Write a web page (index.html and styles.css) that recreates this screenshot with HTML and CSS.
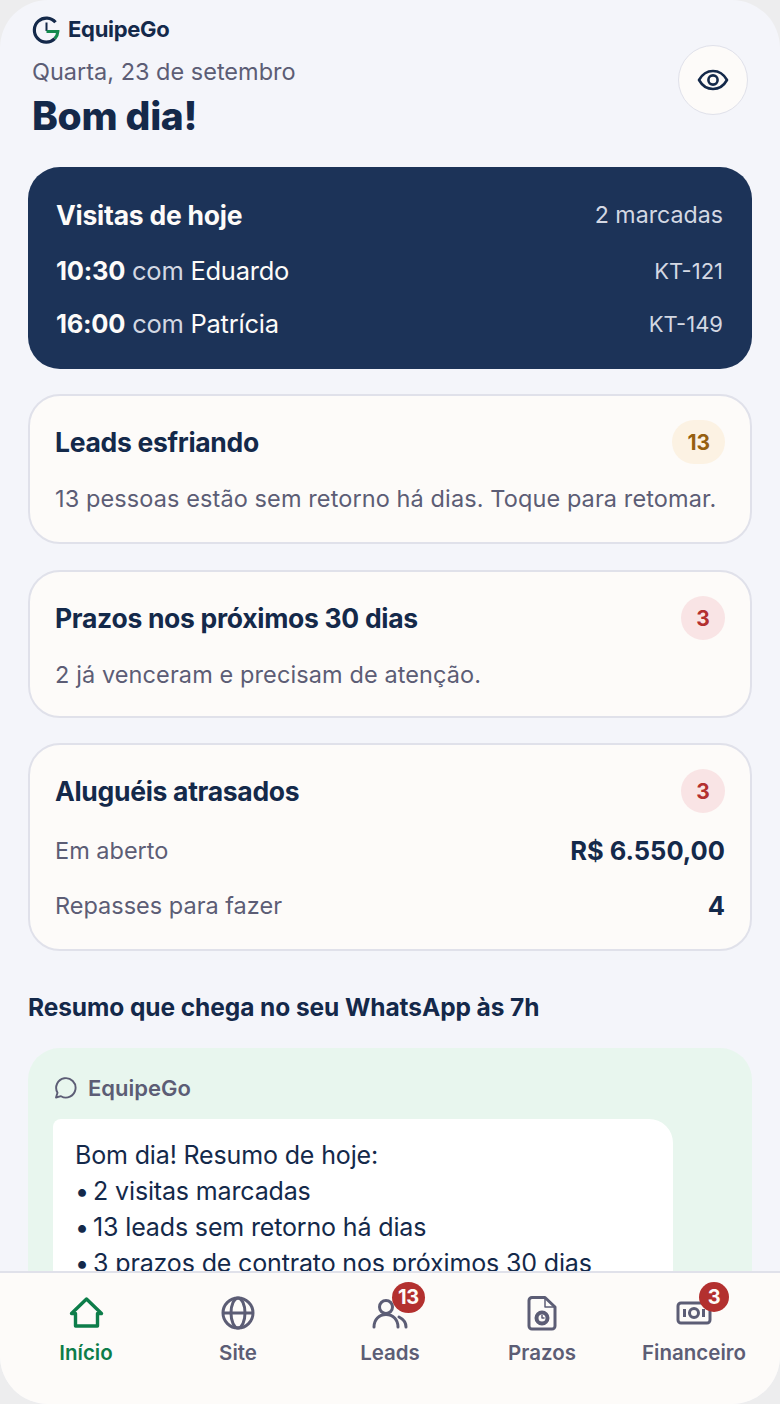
FILE: index.html
```html
<!DOCTYPE html>
<html lang="pt-BR">
<head>
    <meta charset="UTF-8">
    <meta name="viewport" content="width=device-width, initial-scale=1.0">
    <title>EquipeGo</title>
    <link rel="stylesheet" href="styles.css">
</head>
<body>
    <div class="phone">
        <main class="content">
            <!-- Header -->
            <header class="top">
                <div class="top-left">
                    <div class="brand">
                        <svg class="brand-logo" viewBox="0 0 28 28" fill="none" stroke-width="3.200">
                            <path d="M23.500 6.300A12 12 0 1 0 22.800 22.600" stroke="#14294a"/>
                            <path d="M14.500 6.500V15" stroke="#14294a" stroke-width="2"/>
                            <path d="M14.500 15.500H25.800C25.700 18.200 24.600 20.700 22.800 22.600" stroke="#14894e"/>
                        </svg>
                        <span>EquipeGo</span>
                    </div>
                    <p class="date">Quarta, 23 de setembro</p>
                    <h1>Bom dia!</h1>
                </div>
                <button class="eye-button">
                    <svg viewBox="0 0 32 32" fill="none" stroke="#14294a" stroke-width="2.600">
                        <path d="M2 16C5.500 9.800 10.200 7 16 7s10.500 2.800 14 9c-3.500 6.200-8.200 9-14 9S5.500 22.200 2 16Z" stroke-linejoin="round"/>
                        <circle cx="16" cy="16" r="4.600"/>
                    </svg>
                </button>
            </header>

            <!-- Visits -->
            <section class="visits">
                <div class="visit-row visit-head">
                    <strong>Visitas de hoje</strong>
                    <span class="visit-count">2 marcadas</span>
                </div>
                <div class="visit-row">
                    <span class="visit-who"><b>10:30</b> <i>com</i> Eduardo</span>
                    <span class="visit-code">KT-121</span>
                </div>
                <div class="visit-row">
                    <span class="visit-who"><b>16:00</b> <i>com</i> Patrícia</span>
                    <span class="visit-code">KT-149</span>
                </div>
            </section>

            <!-- Cards -->
            <section class="card">
                <div class="card-head">
                    <h2>Leads esfriando</h2>
                    <span class="pill pill-amber">13</span>
                </div>
                <p class="card-text">13 pessoas estão sem retorno há dias. Toque para retomar.</p>
            </section>

            <section class="card card-short">
                <div class="card-head">
                    <h2>Prazos nos próximos 30 dias</h2>
                    <span class="pill pill-red">3</span>
                </div>
                <p class="card-text">2 já venceram e precisam de atenção.</p>
            </section>

            <section class="card card-rent">
                <div class="card-head">
                    <h2>Aluguéis atrasados</h2>
                    <span class="pill pill-red">3</span>
                </div>
                <div class="money-row">
                    <span>Em aberto</span>
                    <strong>R$ 6.550,00</strong>
                </div>
                <div class="money-row">
                    <span>Repasses para fazer</span>
                    <strong>4</strong>
                </div>
            </section>

            <h3 class="section-title">Resumo que chega no seu WhatsApp às 7h</h3>

            <section class="whats">
                <div class="whats-head">
                    <svg viewBox="0 0 24 24" fill="none" stroke="#5c5d75" stroke-width="1.900" stroke-linejoin="round">
                        <path d="M3 21.500l1.500-4.800A9.700 9.700 0 1 1 8 20.200Z"/>
                    </svg>
                    <span>EquipeGo</span>
                </div>
                <div class="bubble">
                    Bom dia! Resumo de hoje:<br>
                    <span class="dot">• </span>2 visitas marcadas<br>
                    <span class="dot">• </span>13 leads sem retorno há dias<br>
                    <span class="dot">• </span>3 prazos de contrato nos próximos 30 dias<br>
                    <span class="dot">• </span>3 aluguéis atrasados
                </div>
            </section>
        </main>

        <!-- Bottom nav -->
        <nav class="tabs">
            <a class="tab tab-active">
                <span class="tab-icon">
                    <svg viewBox="0 0 36 36" fill="none" stroke="#0d7d4a" stroke-width="3.400" stroke-linejoin="round" stroke-linecap="round">
                        <path d="M3.500 18.500 18.500 4l15 14.500h-4V31h-22V18.500Z"/>
                    </svg>
                </span>
                Início
            </a>
            <a class="tab">
                <span class="tab-icon">
                    <svg viewBox="0 0 36 36" fill="none" stroke="#5c5d75" stroke-width="3">
                        <circle cx="18" cy="18" r="15"/>
                        <ellipse cx="18" cy="18" rx="7" ry="15"/>
                        <path d="M3 18h30"/>
                    </svg>
                </span>
                Site
            </a>
            <a class="tab">
                <span class="tab-icon">
                    <svg viewBox="0 0 36 36" fill="none" stroke="#5c5d75" stroke-width="3" stroke-linecap="round">
                        <circle cx="14" cy="12" r="6.500"/>
                        <path d="M2 32c0-7.500 5-12.500 12-12.500S26 24.500 26 32"/>
                        <path d="M27 22c4 2 7 5.500 7 10"/>
                    </svg>
                    <span class="tab-badge">13</span>
                </span>
                Leads
            </a>
            <a class="tab">
                <span class="tab-icon">
                    <svg viewBox="0 0 36 36" fill="none" stroke="#5c5d75" stroke-width="3" stroke-linejoin="round">
                        <path d="M8 2.500h13L31 12v19a3 3 0 0 1-3 3H8a3 3 0 0 1-3-3V5.500a3 3 0 0 1 3-3Z"/>
                        <path d="M21 2.500V12h10" stroke-width="1.500"/>
                        <circle cx="18" cy="23" r="5.500" stroke-width="4"/>
                        <path d="M18 20v3h2.500" stroke-width="1.500"/>
                    </svg>
                </span>
                Prazos
            </a>
            <a class="tab">
                <span class="tab-icon">
                    <svg viewBox="0 0 36 36" fill="none" stroke="#5c5d75" stroke-width="3">
                        <rect x="2" y="8" width="32" height="20" rx="3"/>
                        <circle cx="18" cy="18" r="4.500"/>
                        <path d="M8.500 14v8M27.500 14v8"/>
                    </svg>
                    <span class="tab-badge tab-badge-small">3</span>
                </span>
                Financeiro
            </a>
        </nav>
    </div>
</body>
</html>
```

FILE: styles.css
```css
* {
    box-sizing: border-box;
}

body {
    margin: 0;
    width: 780px;
    height: 1404px;
    background: #ededee;
    font-family: Inter, "Open Sans", sans-serif;
    color: #14294a;
    overflow: hidden;
}

.phone {
    width: 780px;
    height: 1404px;
    border-radius: 48px;
    overflow: hidden;
    background: #f4f5fa;
    display: flex;
    flex-direction: column;
}

.content {
    flex: 1;
    min-height: 0;
    overflow: hidden;
    padding: 16px 28px 0 28px;
}

/* header */
.top {
    display: flex;
    justify-content: space-between;
    align-items: flex-start;
    height: 151px;
    padding: 0 4px;
}

.brand {
    display: flex;
    align-items: center;
    gap: 8px;
    height: 28px;
    font-size: 22px;
    font-weight: 700;
    letter-spacing: -0.300px;
}

.brand span {
    position: relative;
    top: -1px;
}

.brand-logo {
    width: 28px;
    height: 28px;
}

.date {
    margin: 12px 0 0 0;
    font-size: 23.500px;
    line-height: 32px;
    color: #5c5d75;
}

h1 {
    margin: 4px 0 0 0;
    font-size: 39px;
    line-height: 48px;
    font-weight: 800;
    letter-spacing: -0.300px;
}

.eye-button {
    width: 70px;
    height: 70px;
    margin-top: 29px;
    border-radius: 50%;
    border: 1.500px solid #e0e1ea;
    background: #fdfbf9;
    display: flex;
    align-items: center;
    justify-content: center;
    padding: 0;
}

.eye-button svg {
    width: 32px;
    height: 32px;
}

/* visits card */
.visits {
    background: #1c3358;
    border-radius: 32px;
    height: 202px;
    padding: 24px 29px 0 28px;
    color: #fdfbf9;
    margin-bottom: 25px;
}

.visit-row {
    display: flex;
    justify-content: space-between;
    align-items: center;
    height: 53px;
}

.visit-head {
    height: 48px;
    margin-bottom: 5px;
}

.visit-head strong {
    font-size: 26.500px;
    font-weight: 700;
    letter-spacing: -0.230px;
}

.visit-who {
    font-size: 25.500px;
    letter-spacing: -0.250px;
}

.visit-who b {
    font-weight: 700;
}

.visit-who i {
    font-style: normal;
    color: #d3d8e3;
}

.visit-count {
    font-size: 23.200px;
    color: #d3d8e3;
}

.visit-code {
    font-size: 22px;
    color: #d3d8e3;
}

/* cards */
.card {
    background: #fdfbf9;
    border: 2px solid #e0e1ea;
    border-radius: 32px;
    padding: 24px 25px 0 25px;
    height: 150px;
    margin-bottom: 26px;
}

.card-short {
    height: 148px;
    margin-bottom: 25px;
}

.card-rent {
    height: 208px;
    margin-bottom: 0;
}

.card-head {
    display: flex;
    justify-content: space-between;
    align-items: center;
    height: 44px;
}

h2 {
    margin: 0;
    font-size: 26.500px;
    font-weight: 700;
    letter-spacing: -0.300px;
}

.pill {
    height: 44px;
    min-width: 44px;
    padding: 0 15px;
    border-radius: 22px;
    display: flex;
    align-items: center;
    justify-content: center;
    font-size: 21px;
    font-weight: 700;
}

.pill-amber {
    background: #fcf2e3;
    color: #96600f;
}

.pill-red {
    background: #f9e4e5;
    color: #b3302f;
}

.card-text {
    margin: 19px 0 0 0;
    font-size: 23.500px;
    line-height: 32px;
    color: #5c5d75;
    letter-spacing: 0.100px;
    white-space: nowrap;
}

.money-row {
    display: flex;
    justify-content: space-between;
    align-items: center;
    height: 55px;
    font-size: 23.500px;
    color: #5c5d75;
    letter-spacing: 0.100px;
}

.card-head + .money-row {
    margin-top: 10px;
}

.money-row span {
    letter-spacing: 0;
}

.money-row strong {
    font-size: 25.500px;
    font-weight: 700;
    color: #14294a;
    letter-spacing: 0;
}

.section-title {
    margin: 40px 0 25px 0;
    font-size: 24.500px;
    line-height: 32px;
    font-weight: 700;
    letter-spacing: -0.080px;
}

/* whatsapp preview */
.whats {
    background: #e8f6ee;
    border-radius: 32px;
    padding: 24px 25px 28px 25px;
}

.whats-head {
    display: flex;
    align-items: center;
    gap: 11px;
    height: 32px;
    font-size: 22px;
    font-weight: 600;
    color: #5c5d75;
}

.whats-head svg {
    width: 24px;
    height: 24px;
}

.bubble {
    margin-top: 15px;
    width: 620px;
    background: #ffffff;
    border-radius: 8px 24px 24px 24px;
    padding: 18px 22px;
    font-size: 25px;
    line-height: 36px;
    letter-spacing: -0.150px;
    white-space: nowrap;
}

.dot {
    letter-spacing: -1.500px;
}

/* bottom nav */
.tabs {
    flex: none;
    height: 133px;
    background: #fdfbf9;
    border-top: 2px solid #e0e1ea;
    display: grid;
    grid-template-columns: repeat(5, 1fr);
    padding: 22px 10px 0 10px;
}

.tab {
    display: flex;
    flex-direction: column;
    align-items: center;
    font-size: 20.500px;
    line-height: 28px;
    font-weight: 600;
    color: #5c5d75;
}

.tab-active {
    color: #0d7d4a;
}

.tab-icon {
    position: relative;
    width: 36px;
    height: 36px;
    margin-bottom: 8px;
}

.tab-icon svg {
    width: 36px;
    height: 36px;
    display: block;
}

.tab-badge {
    position: absolute;
    top: -13px;
    left: 20px;
    width: 33px;
    height: 31px;
    border-radius: 50%;
    background: #b3302f;
    color: #fdfbf9;
    font-size: 20px;
    line-height: 31px;
    font-weight: 700;
    text-align: center;
    letter-spacing: -0.300px;
}

.tab-badge-small {
    width: 30px;
    height: 30px;
    line-height: 30px;
    left: 23px;
}
```
